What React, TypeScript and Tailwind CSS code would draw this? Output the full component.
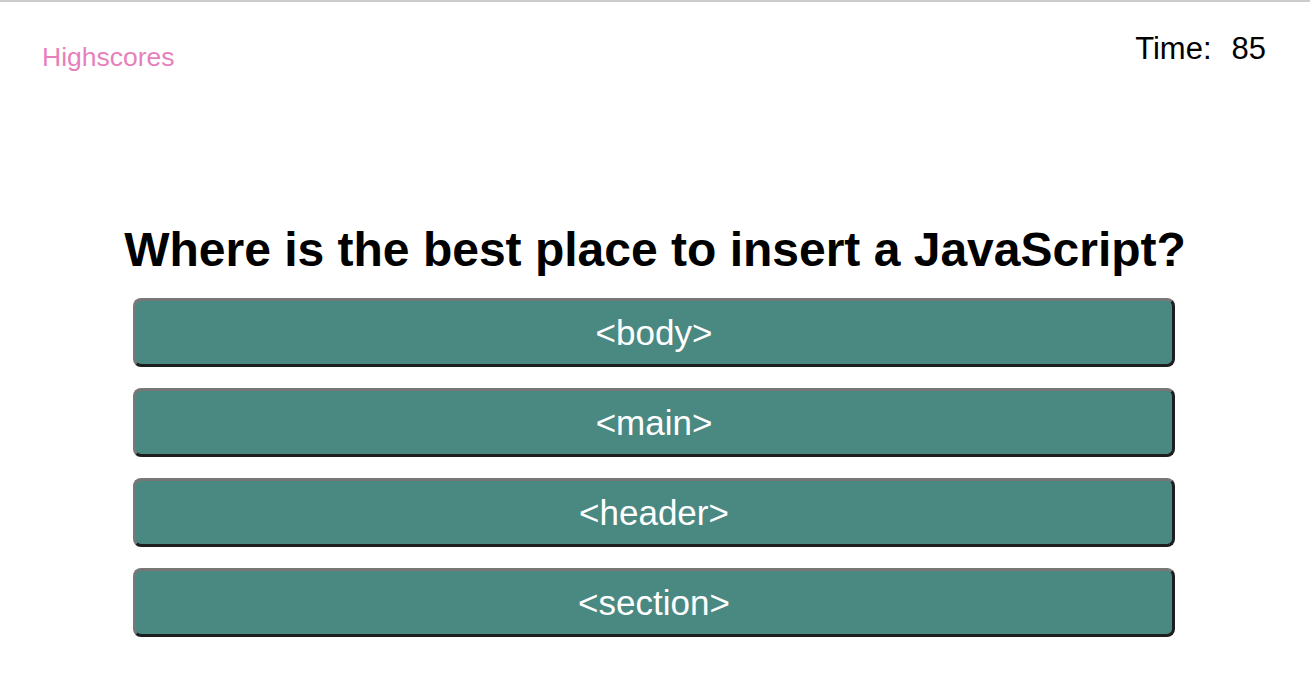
const answers = ["<body>", "<main>", "<header>", "<section>"];

export default function App() {
  return (
    <div
      className="min-h-[694px] border-t-2 border-[#cccccc] bg-white text-black"
      style={{ fontFamily: '"Liberation Sans", Arial, sans-serif' }}
    >
      <header className="flex items-start justify-between pl-[42px] pr-[44px]">
        <a href="#" className="mt-[40px] text-[26.5px] leading-[1.15] text-[#e77fbd]">
          Highscores
        </a>
        <div className="mt-[29px] flex text-[31px] leading-[1.15]">
          <span>Time:</span>
          <span className="ml-[20px]">85</span>
        </div>
      </header>

      <main className="mt-[150px] flex flex-col items-center">
        <h1 className="text-[48px] font-bold leading-[1.15]">
          Where is the best place to insert a JavaScript?
        </h1>
        <div className="ml-[133px] mt-[20px] flex flex-col gap-[21px] self-start">
          {answers.map((answer) => (
            <button
              key={answer}
              className="h-[69px] w-[1042px] rounded-[8px] border-[3px] border-t-[#777777] border-l-[#777777] border-b-[#1e1e1e] border-r-[#1e1e1e] bg-[#4a8982] text-[35px] leading-none text-white"
            >
              {answer}
            </button>
          ))}
        </div>
      </main>
    </div>
  );
}
